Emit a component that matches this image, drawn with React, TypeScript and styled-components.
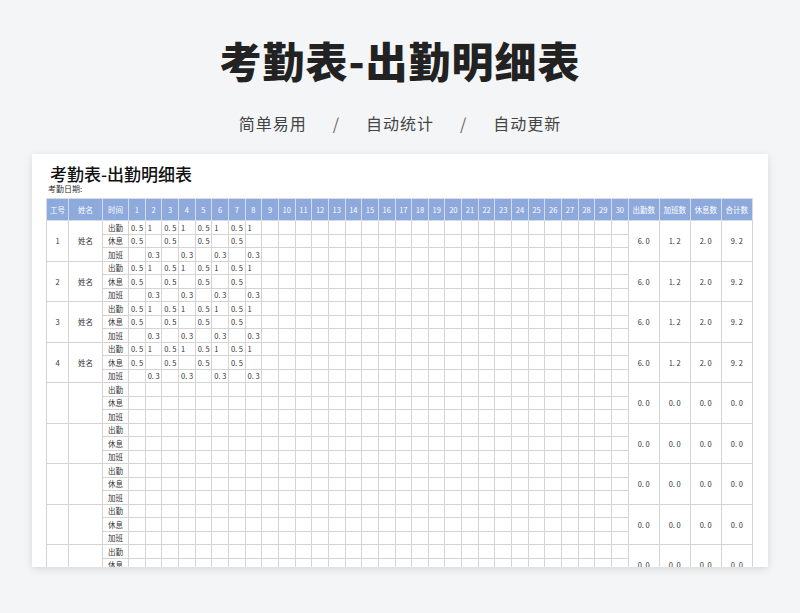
import styled, { createGlobalStyle } from 'styled-components'

const Global = createGlobalStyle`
  body { margin: 0; background: #f4f5f7; font-family: "Noto Sans CJK SC", "Noto Sans", sans-serif; }
`

const Page = styled.div`
  width: 800px;
  height: 613px;
  display: flex;
  flex-direction: column;
  align-items: center;
  overflow: hidden;
`

const Title = styled.h1`
  margin: 34px 0 0;
  font-size: 42px;
  line-height: 52px;
  font-weight: 900;
  color: #222;
  letter-spacing: 1px;
`

const Sub = styled.div`
  margin-top: 26px;
  font-size: 16px;
  line-height: 22px;
  color: #444;
  letter-spacing: 1px;
  display: flex;
  gap: 20px;
`

const Slash = styled.span`
  color: #666;
  margin: 0 6px;
`

const Card = styled.div`
  margin-top: 20px;
  width: 736px;
  height: 413px;
  background: #fff;
  box-shadow: 0 2px 8px rgba(0, 0, 0, 0.12);
  padding: 10px 14px 0;
  box-sizing: border-box;
  overflow: hidden;
`

const SheetTitle = styled.div`
  font-size: 17px;
  font-weight: 500;
  color: #111;
  line-height: 20px;
  padding-left: 4px;
`

const Meta = styled.div`
  font-size: 8px;
  line-height: 10px;
  color: #333;
  padding-left: 2px;
  height: 14px;
`

const Table = styled.table`
  border-collapse: collapse;
  table-layout: fixed;
  width: 707px;
  font-family: "Noto Sans CJK SC", "DejaVu Sans", sans-serif;
  font-size: 7.5px;
  color: #333;
`

const Th = styled.th`
  background: #8ea9dc;
  color: #fff;
  font-weight: 400;
  height: 21px;
  border: 1px solid #d6dbe6;
  padding: 0;
  text-align: center;
`

const Td = styled.td<{ $left?: boolean }>`
  border: 1px solid #d4d4d4;
  height: 12.5px;
  padding: 0 0 0 ${p => (p.$left ? '2px' : '0')};
  text-align: ${p => (p.$left ? 'left' : 'center')};
  white-space: nowrap;
  overflow: hidden;
  color: #333;
`

const days = Array.from({ length: 30 }, (_, i) => i + 1)
const filled = [1, 2, 3, 4]
const groups = [1, 2, 3, 4, 5, 6, 7, 8, 9, 10]

const val = (g: number, type: number, d: number) => {
  if (!filled.includes(g) || d > 8) return ''
  if (type === 0) return d % 2 ? '0. 5' : '1'
  if (type === 1) return d % 2 ? '0. 5' : ''
  return d % 2 ? '' : '0. 3'
}

export default function App() {
  return (
    <Page>
      <Global />
      <Title>考勤表-出勤明细表</Title>
      <Sub>
        <span>简单易用</span><Slash>/</Slash><span>自动统计</span><Slash>/</Slash><span>自动更新</span>
      </Sub>
      <Card>
        <SheetTitle>考勤表-出勤明细表</SheetTitle>
        <Meta>考勤日期:</Meta>
        <Table>
          <colgroup>
            <col style={{ width: 22 }} />
            <col style={{ width: 34 }} />
            <col style={{ width: 26 }} />
            {days.map(d => <col key={d} style={{ width: 16.66 }} />)}
            <col style={{ width: 31 }} />
            <col style={{ width: 31 }} />
            <col style={{ width: 31 }} />
            <col style={{ width: 31 }} />
          </colgroup>
          <thead>
            <tr>
              <Th>工号</Th><Th>姓名</Th><Th>时间</Th>
              {days.map(d => <Th key={d}>{d}</Th>)}
              <Th>出勤数</Th><Th>加班数</Th><Th>休息数</Th><Th>合计数</Th>
            </tr>
          </thead>
          <tbody>
            {groups.flatMap(g => {
              const f = filled.includes(g)
              return ['出勤', '休息', '加班'].map((t, ti) => (
                <tr key={`${g}-${ti}`}>
                  {ti === 0 && (
                    <>
                      <Td rowSpan={3}>{f ? g : ''}</Td>
                      <Td rowSpan={3}>{f ? '姓名' : ''}</Td>
                    </>
                  )}
                  <Td>{t}</Td>
                  {days.map(d => <Td key={d} $left>{val(g, ti, d)}</Td>)}
                  {ti === 0 && (
                    <>
                      <Td rowSpan={3}>{f ? '6. 0' : '0. 0'}</Td>
                      <Td rowSpan={3}>{f ? '1. 2' : '0. 0'}</Td>
                      <Td rowSpan={3}>{f ? '2. 0' : '0. 0'}</Td>
                      <Td rowSpan={3}>{f ? '9. 2' : '0. 0'}</Td>
                    </>
                  )}
                </tr>
              ))
            })}
          </tbody>
        </Table>
      </Card>
    </Page>
  )
}
